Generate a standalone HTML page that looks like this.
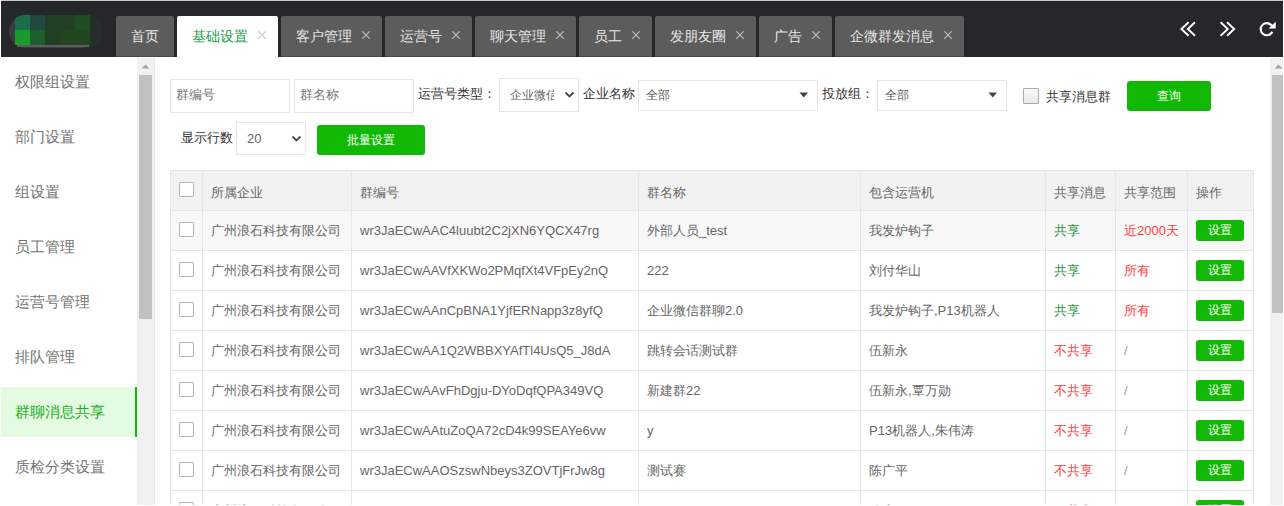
<!DOCTYPE html>
<html><head><meta charset="utf-8">
<style>
*{box-sizing:border-box;margin:0;padding:0}
html,body{width:1284px;height:506px;overflow:hidden;background:#fff;font-family:"Liberation Sans",sans-serif;}
.a{position:absolute}
#topline{left:1px;top:0;width:1282px;height:1px;background:#c8cacd}
#hdr{left:1px;top:1px;width:1282px;height:56px;background:#25272b}
.tab{position:absolute;top:16px;height:41px;background:#5c5c5c;border-bottom:1px solid #46484b;border-radius:2px 2px 0 0;color:#e6e6e6;font-size:14px;line-height:40px;white-space:nowrap}
.tab .t{position:absolute;left:15px;top:0}
.tab .x{position:absolute;right:12px;top:15px;width:8px;height:8px}
.tab.on{background:#fff;border-bottom:0;color:#17a04c}
.side{left:15px;font-size:15px;color:#747474;line-height:20px;white-space:nowrap}
.lbl{font-size:13px;color:#333;white-space:nowrap;line-height:16px}
.inp{border:1px solid #e6e6e6;background:#fff}
.ph{font-size:13px;color:#757575;line-height:16px;white-space:nowrap}
.btn{background:#12b904;border-radius:3px;color:#fff;font-size:12px;text-align:center;white-space:nowrap}
.cell{font-size:13px;color:#666;line-height:16px;white-space:nowrap}
.hl{left:170px;width:1084px;height:1px;background:#e6e6e6}
.vl{top:170px;width:1px;height:336px;background:#e6e6e6}
.cb{width:15px;height:15px;border:1px solid #b5b5b5;border-radius:1px;background:#fff}
</style></head><body>
<div class="a" id="topline"></div>
<div class="a" id="hdr"></div>

<!-- logo mosaic -->
<div class="a" style="left:9px;top:15px;width:93px;height:33px;border-radius:17px;background:#3a3c40"></div>
<div class="a" style="left:84px;top:15px;width:18px;height:33px;border-radius:0 17px 17px 0;background:#232f28"></div>
<div class="a" style="left:17px;top:44px;width:72px;height:3px;background:#5a5c60"></div>
<div class="a" style="left:15px;top:15px;width:15px;height:15px;background:#1b6e4a;border-top-left-radius:11px 5px"></div>
<div class="a" style="left:30px;top:15px;width:15px;height:15px;background:#1e4b3d"></div>
<div class="a" style="left:45px;top:15px;width:30px;height:15px;background:#223f26"></div>
<div class="a" style="left:75px;top:15px;width:15px;height:15px;background:#1f4e22"></div>
<div class="a" style="left:15px;top:30px;width:15px;height:15px;background:#1a9a2e"></div>
<div class="a" style="left:30px;top:30px;width:15px;height:15px;background:#1c5e30"></div>
<div class="a" style="left:45px;top:30px;width:15px;height:15px;background:#223f24"></div>
<div class="a" style="left:60px;top:30px;width:30px;height:15px;background:#21461f"></div>

<!-- tabs -->
<div class="tab" style="left:116px;width:58px"><span class="t">首页</span></div>
<div class="tab on" style="left:177px;width:101px"><span class="t">基础设置</span><svg class="x" viewBox="0 0 8 8"><path d="M0.3 0.3L7.7 7.7M7.7 0.3L0.3 7.7" stroke="#c8c8c8" stroke-width="1.2"/></svg></div>
<div class="tab" style="left:281px;width:101px"><span class="t">客户管理</span><svg class="x" viewBox="0 0 8 8"><path d="M0.3 0.3L7.7 7.7M7.7 0.3L0.3 7.7" stroke="#bbb" stroke-width="1.2"/></svg></div>
<div class="tab" style="left:385px;width:87px"><span class="t">运营号</span><svg class="x" viewBox="0 0 8 8"><path d="M0.3 0.3L7.7 7.7M7.7 0.3L0.3 7.7" stroke="#bbb" stroke-width="1.2"/></svg></div>
<div class="tab" style="left:475px;width:101px"><span class="t">聊天管理</span><svg class="x" viewBox="0 0 8 8"><path d="M0.3 0.3L7.7 7.7M7.7 0.3L0.3 7.7" stroke="#bbb" stroke-width="1.2"/></svg></div>
<div class="tab" style="left:579px;width:73px"><span class="t">员工</span><svg class="x" viewBox="0 0 8 8"><path d="M0.3 0.3L7.7 7.7M7.7 0.3L0.3 7.7" stroke="#bbb" stroke-width="1.2"/></svg></div>
<div class="tab" style="left:655px;width:101px"><span class="t">发朋友圈</span><svg class="x" viewBox="0 0 8 8"><path d="M0.3 0.3L7.7 7.7M7.7 0.3L0.3 7.7" stroke="#bbb" stroke-width="1.2"/></svg></div>
<div class="tab" style="left:759px;width:73px"><span class="t">广告</span><svg class="x" viewBox="0 0 8 8"><path d="M0.3 0.3L7.7 7.7M7.7 0.3L0.3 7.7" stroke="#bbb" stroke-width="1.2"/></svg></div>
<div class="tab" style="left:835px;width:129px"><span class="t">企微群发消息</span><svg class="x" viewBox="0 0 8 8"><path d="M0.3 0.3L7.7 7.7M7.7 0.3L0.3 7.7" stroke="#bbb" stroke-width="1.2"/></svg></div>

<!-- header icons -->
<svg class="a" style="left:1178px;top:20px" width="20" height="18" viewBox="0 0 20 18">
<path d="M10.6 2.2L3.4 9L10.6 15.8M17 2.2L9.8 9L17 15.8" fill="none" stroke="#fff" stroke-width="1.9"/></svg>
<svg class="a" style="left:1218px;top:20px" width="20" height="18" viewBox="0 0 20 18">
<path d="M2.6 2.2L9.8 9L2.6 15.8M9 2.2L16.2 9L9 15.8" fill="none" stroke="#fff" stroke-width="1.9"/></svg>
<svg class="a" style="left:1258px;top:20px" width="20" height="18" viewBox="0 0 20 18">
<path d="M13.80 5.70A6.1 6.1 0 1 0 14.33 11.78" fill="none" stroke="#fff" stroke-width="2.1"/><path d="M17.7 1.7V8.6H10.6Z" fill="#fff"/></svg>
<!-- sidebar -->
<div class="a" style="left:154px;top:58px;width:1px;height:448px;background:#e8e8e8"></div>
<div class="a side" style="top:72px">权限组设置</div>
<div class="a side" style="top:127px">部门设置</div>
<div class="a side" style="top:182px">组设置</div>
<div class="a side" style="top:237px">员工管理</div>
<div class="a side" style="top:292px">运营号管理</div>
<div class="a side" style="top:347px">排队管理</div>
<div class="a" style="left:1px;top:387px;width:136px;height:50px;background:#e3fbe0;border-right:2px solid #12b904"></div>
<div class="a side" style="top:402px;color:#1fae1f">群聊消息共享</div>
<div class="a side" style="top:457px">质检分类设置</div>
<!-- sidebar scrollbar -->
<div class="a" style="left:137px;top:58px;width:17px;height:448px;background:#f1f1f1"></div>
<svg class="a" style="left:137px;top:58px" width="17" height="17" viewBox="0 0 17 17"><path d="M4.5 10.5L8.5 6.5L12.5 10.5Z" fill="#a3a3a3"/></svg>
<div class="a" style="left:139px;top:75px;width:13px;height:244px;background:#c1c1c1"></div>

<!-- page scrollbar -->
<div class="a" style="left:1270px;top:58px;width:13px;height:448px;background:#f1f1f1"></div>
<svg class="a" style="left:1269.5px;top:58px" width="17" height="17" viewBox="0 0 17 17"><path d="M4.5 10.5L8.5 6.5L12.5 10.5Z" fill="#a3a3a3"/></svg>
<div class="a" style="left:1272px;top:75px;width:12px;height:238px;background:#c1c1c1"></div>

<!-- filter row 1 -->
<div class="a inp" style="left:170px;top:79px;width:120px;height:34px"></div>
<div class="a ph" style="left:176px;top:87px">群编号</div>
<div class="a inp" style="left:294px;top:79px;width:120px;height:34px"></div>
<div class="a ph" style="left:300px;top:87px">群名称</div>
<div class="a lbl" style="left:418px;top:86px">运营号类型：</div>
<div class="a inp" style="left:499px;top:78px;width:80px;height:34px"></div>
<div class="a ph" style="left:510px;top:87px;font-size:12px;color:#666;width:44px;overflow:hidden">企业微信</div>
<svg class="a" style="left:564px;top:91px" width="11" height="8" viewBox="0 0 11 8"><path d="M1.5 1.5L5.5 5.5L9.5 1.5" fill="none" stroke="#4a4a4a" stroke-width="1.8"/></svg>
<div class="a lbl" style="left:583px;top:86px">企业名称</div>
<div class="a inp" style="left:638px;top:80px;width:180px;height:31px"></div>
<div class="a ph" style="left:646px;top:87px;font-size:12px;color:#555">全部</div>
<svg class="a" style="left:799px;top:92px" width="10" height="6" viewBox="0 0 10 6"><path d="M0.5 0.5H9L4.75 5.5Z" fill="#444"/></svg>
<div class="a lbl" style="left:822px;top:86px">投放组：</div>
<div class="a inp" style="left:877px;top:80px;width:130px;height:31px"></div>
<div class="a ph" style="left:885px;top:87px;font-size:12px;color:#555">全部</div>
<svg class="a" style="left:988px;top:92px" width="10" height="6" viewBox="0 0 10 6"><path d="M0.5 0.5H9L4.75 5.5Z" fill="#444"/></svg>
<div class="a cb" style="left:1023px;top:88px;width:16px;height:16px;background:linear-gradient(#fafafa,#e9e9e9);border-color:#a9a9a9"></div>
<div class="a lbl" style="left:1046px;top:89px">共享消息群</div>
<div class="a btn" style="left:1127px;top:81px;width:84px;height:30px;line-height:30px">查询</div>

<!-- filter row 2 -->
<div class="a lbl" style="left:181px;top:130px">显示行数</div>
<div class="a inp" style="left:236px;top:122px;width:70px;height:33px"></div>
<div class="a ph" style="left:247px;top:131px;font-size:13px;color:#666">20</div>
<svg class="a" style="left:291px;top:135px" width="11" height="8" viewBox="0 0 11 8"><path d="M1.5 1.5L5.5 5.5L9.5 1.5" fill="none" stroke="#4a4a4a" stroke-width="1.8"/></svg>
<div class="a btn" style="left:317px;top:125px;width:108px;height:30px;line-height:30px">批量设置</div>

<!-- table -->
<!--TBL-->
<div id="tbl">
<div class="a" style="left:170px;top:170px;width:1084px;height:40px;background:#f2f2f2"></div>
<div class="a" style="left:170px;top:210px;width:1084px;height:40px;background:#f8f8f8"></div>
<div class="a hl" style="top:170px"></div>
<div class="a hl" style="top:210px"></div>
<div class="a hl" style="top:250px"></div>
<div class="a hl" style="top:290px"></div>
<div class="a hl" style="top:330px"></div>
<div class="a hl" style="top:370px"></div>
<div class="a hl" style="top:410px"></div>
<div class="a hl" style="top:450px"></div>
<div class="a hl" style="top:490px"></div>
<div class="a vl" style="left:170px"></div>
<div class="a vl" style="left:202px"></div>
<div class="a vl" style="left:351px"></div>
<div class="a vl" style="left:638px"></div>
<div class="a vl" style="left:860px"></div>
<div class="a vl" style="left:1045px"></div>
<div class="a vl" style="left:1115px"></div>
<div class="a vl" style="left:1187px"></div>
<div class="a vl" style="left:1253px"></div>
<div class="a cell" style="left:211px;top:185px">所属企业</div>
<div class="a cell" style="left:360px;top:185px">群编号</div>
<div class="a cell" style="left:647px;top:185px">群名称</div>
<div class="a cell" style="left:869px;top:185px">包含运营机</div>
<div class="a cell" style="left:1054px;top:185px">共享消息</div>
<div class="a cell" style="left:1124px;top:185px">共享范围</div>
<div class="a cell" style="left:1196px;top:185px">操作</div>
<div class="a cb" style="left:179px;top:182px"></div>
<div class="a cb" style="left:179px;top:222px"></div>
<div class="a cell" style="left:211px;top:223px">广州浪石科技有限公司</div>
<div class="a cell" style="left:360px;top:223px">wr3JaECwAAC4luubt2C2jXN6YQCX47rg</div>
<div class="a cell" style="left:647px;top:223px">外部人员_test</div>
<div class="a cell" style="left:869px;top:223px">我发炉钩子</div>
<div class="a cell" style="left:1054px;top:223px;color:#2f8f3f">共享</div>
<div class="a cell" style="left:1124px;top:223px;color:#ff3c3c">近2000天</div>
<div class="a btn" style="left:1196px;top:220px;width:48px;height:21px;line-height:21px">设置</div>
<div class="a cb" style="left:179px;top:262px"></div>
<div class="a cell" style="left:211px;top:263px">广州浪石科技有限公司</div>
<div class="a cell" style="left:360px;top:263px">wr3JaECwAAVfXKWo2PMqfXt4VFpEy2nQ</div>
<div class="a cell" style="left:647px;top:263px">222</div>
<div class="a cell" style="left:869px;top:263px">刘付华山</div>
<div class="a cell" style="left:1054px;top:263px;color:#2f8f3f">共享</div>
<div class="a cell" style="left:1124px;top:263px;color:#ff3c3c">所有</div>
<div class="a btn" style="left:1196px;top:260px;width:48px;height:21px;line-height:21px">设置</div>
<div class="a cb" style="left:179px;top:302px"></div>
<div class="a cell" style="left:211px;top:303px">广州浪石科技有限公司</div>
<div class="a cell" style="left:360px;top:303px">wr3JaECwAAnCpBNA1YjfERNapp3z8yfQ</div>
<div class="a cell" style="left:647px;top:303px">企业微信群聊2.0</div>
<div class="a cell" style="left:869px;top:303px">我发炉钩子,P13机器人</div>
<div class="a cell" style="left:1054px;top:303px;color:#2f8f3f">共享</div>
<div class="a cell" style="left:1124px;top:303px;color:#ff3c3c">所有</div>
<div class="a btn" style="left:1196px;top:300px;width:48px;height:21px;line-height:21px">设置</div>
<div class="a cb" style="left:179px;top:342px"></div>
<div class="a cell" style="left:211px;top:343px">广州浪石科技有限公司</div>
<div class="a cell" style="left:360px;top:343px">wr3JaECwAA1Q2WBBXYAfTl4UsQ5_J8dA</div>
<div class="a cell" style="left:647px;top:343px">跳转会话测试群</div>
<div class="a cell" style="left:869px;top:343px">伍新永</div>
<div class="a cell" style="left:1054px;top:343px;color:#ff3c3c">不共享</div>
<div class="a cell" style="left:1124px;top:343px;color:#999">/</div>
<div class="a btn" style="left:1196px;top:340px;width:48px;height:21px;line-height:21px">设置</div>
<div class="a cb" style="left:179px;top:382px"></div>
<div class="a cell" style="left:211px;top:383px">广州浪石科技有限公司</div>
<div class="a cell" style="left:360px;top:383px">wr3JaECwAAvFhDgju-DYoDqfQPA349VQ</div>
<div class="a cell" style="left:647px;top:383px">新建群22</div>
<div class="a cell" style="left:869px;top:383px">伍新永,覃万勋</div>
<div class="a cell" style="left:1054px;top:383px;color:#ff3c3c">不共享</div>
<div class="a cell" style="left:1124px;top:383px;color:#999">/</div>
<div class="a btn" style="left:1196px;top:380px;width:48px;height:21px;line-height:21px">设置</div>
<div class="a cb" style="left:179px;top:422px"></div>
<div class="a cell" style="left:211px;top:423px">广州浪石科技有限公司</div>
<div class="a cell" style="left:360px;top:423px">wr3JaECwAAtuZoQA72cD4k99SEAYe6vw</div>
<div class="a cell" style="left:647px;top:423px">y</div>
<div class="a cell" style="left:869px;top:423px">P13机器人,朱伟涛</div>
<div class="a cell" style="left:1054px;top:423px;color:#ff3c3c">不共享</div>
<div class="a cell" style="left:1124px;top:423px;color:#999">/</div>
<div class="a btn" style="left:1196px;top:420px;width:48px;height:21px;line-height:21px">设置</div>
<div class="a cb" style="left:179px;top:462px"></div>
<div class="a cell" style="left:211px;top:463px">广州浪石科技有限公司</div>
<div class="a cell" style="left:360px;top:463px">wr3JaECwAAOSzswNbeys3ZOVTjFrJw8g</div>
<div class="a cell" style="left:647px;top:463px">测试赛</div>
<div class="a cell" style="left:869px;top:463px">陈广平</div>
<div class="a cell" style="left:1054px;top:463px;color:#ff3c3c">不共享</div>
<div class="a cell" style="left:1124px;top:463px;color:#999">/</div>
<div class="a btn" style="left:1196px;top:460px;width:48px;height:21px;line-height:21px">设置</div>
<div class="a cb" style="left:179px;top:502px"></div>
<div class="a cell" style="left:211px;top:503px">广州浪石科技有限公司</div>
<div class="a cell" style="left:360px;top:503px"></div>
<div class="a cell" style="left:647px;top:503px"></div>
<div class="a cell" style="left:869px;top:503px">陈广平</div>
<div class="a cell" style="left:1054px;top:503px;color:#ff3c3c">不共享</div>
<div class="a cell" style="left:1124px;top:503px;color:#999">/</div>
<div class="a btn" style="left:1196px;top:500px;width:48px;height:21px;line-height:21px">设置</div>
</div>
<!--/TBL-->
<div class="a" style="left:0;top:505px;width:1284px;height:1px;background:#fff"></div>
<div class="a" style="left:1283px;top:0;width:1px;height:506px;background:#fff"></div>
</body></html>
